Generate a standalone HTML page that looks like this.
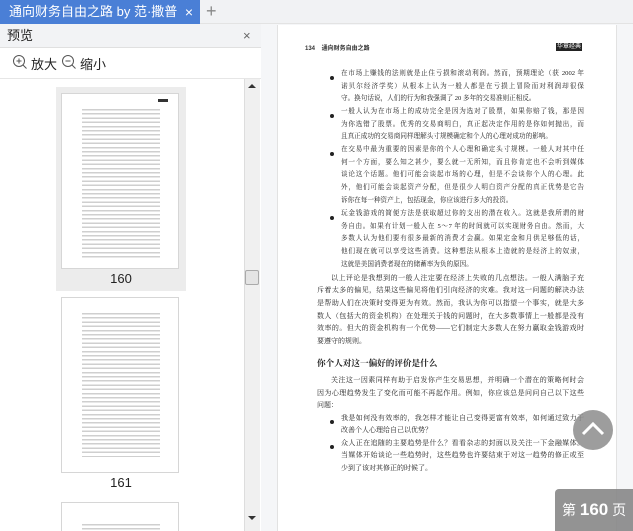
<!DOCTYPE html>
<html style="width:633px;height:531px;overflow:hidden"><head><meta charset="utf-8"><style>
*{margin:0;padding:0;box-sizing:border-box}
body{width:633px;height:531px;overflow:hidden;background:#f5f6f8;font-family:"Liberation Sans","Noto Sans CJK SC",sans-serif;position:relative}
.a{position:absolute}
.tabbar{left:0;top:0;width:633px;height:24px;background:#f1f2f4;border-bottom:1px solid #e3e3e3}
.tab{left:0;top:0;width:200px;height:24px;background:#4a7fd6;color:#fff;font-size:13px;line-height:24px;padding-left:9px;white-space:nowrap;overflow:hidden}
.panel{left:0;top:24px;width:261px;height:507px;background:#fff}
.ph{left:0;top:24px;width:261px;height:24px;background:#f2f3f5;border-bottom:1px solid #e0e0e0;font-size:13px;line-height:24px;padding-left:7px;color:#222}
.tool{left:0;top:48px;width:261px;height:31px;border-bottom:1px solid #e6e6e6;font-size:13px;color:#222}
.sb{left:244px;top:79px;width:16px;height:452px;background:#f0f0f0;border-left:1px solid #ddd}
.page{left:277px;top:25px;width:340px;height:506px;background:#fff;border-left:1px solid #e2e2e2;border-right:1px solid #e2e2e2}
.ln{position:absolute;font-family:"Liberation Serif","Noto Serif CJK SC",serif;font-size:6.6px;color:#222;white-space:nowrap;text-align:justify;text-align-last:justify;line-height:12px;height:12px;overflow:hidden}
.ln.l{text-align:left;text-align-last:left}
.b{left:341px;width:243px}
.p{left:317px;width:267px;font-size:7px}
.dot{position:absolute;left:330px;width:4px;height:4px;border-radius:50%;background:#222}
.th{position:absolute;left:61px;width:118px;height:176px;background:#fff;border:1px solid #d6d6d6;overflow:hidden}
.tl{position:absolute;background:repeating-linear-gradient(#fff 0,#fff 1px,#cfcfcf 1px,#cfcfcf 2.5px,#fff 2.5px,#fff 4.2px)}
</style></head><body>
<div class="a tabbar"></div>
<div class="a tab">通向财务自由之路 by 范·撒普.pdf</div>
<div class="a" style="left:178px;top:0;width:22px;height:24px;background:#4a7fd6;color:#fff;font-size:14px;line-height:24px;text-align:center">×</div>
<div class="a" style="left:206px;top:0;font-size:18px;line-height:22px;color:#888">+</div>
<div class="a panel"></div>
<div class="a ph">预览<span style="position:absolute;left:243px;color:#666">×</span></div>
<div class="a tool">
 <svg class="a" style="left:12px;top:6px" width="16" height="16" viewBox="0 0 16 16"><circle cx="7" cy="7" r="5.5" fill="none" stroke="#555"/><path d="M4.5 7h5M7 4.5v5M11 11l3.5 3.5" stroke="#555" fill="none"/></svg>
 <span class="a" style="left:31px;top:6px">放大</span>
 <svg class="a" style="left:61px;top:6px" width="16" height="16" viewBox="0 0 16 16"><circle cx="7" cy="7" r="5.5" fill="none" stroke="#555"/><path d="M4.5 7h5M11 11l3.5 3.5" stroke="#555" fill="none"/></svg>
 <span class="a" style="left:80px;top:6px">缩小</span>
</div>
<div class="a sb"></div>
<div class="a" style="left:248px;top:84px;width:0;height:0;border-left:4px solid transparent;border-right:4px solid transparent;border-bottom:4px solid #333"></div>
<div class="a" style="left:245px;top:270px;width:14px;height:15px;background:#e4e4e4;border:1px solid #aaa;border-radius:2px"></div>
<div class="a" style="left:248px;top:516px;width:0;height:0;border-left:4px solid transparent;border-right:4px solid transparent;border-top:4px solid #333"></div>
<div class="a" style="left:56px;top:87px;width:130px;height:204px;background:#ececec"></div>
<div class="th" style="top:93px"><div class="tl" style="left:20px;top:14px;width:78px;height:150px"></div><div class="a" style="left:96px;top:5px;width:10px;height:3px;background:#333"></div></div>
<div class="a" style="left:56px;top:271px;width:130px;text-align:center;font-size:13px;color:#222">160</div>
<div class="th" style="top:297px"><div class="tl" style="left:20px;top:14px;width:78px;height:145px"></div></div>
<div class="a" style="left:56px;top:475px;width:130px;text-align:center;font-size:13px;color:#222">161</div>
<div class="th" style="top:502px;height:29px;border-bottom:none"><div class="tl" style="left:20px;top:20px;width:78px;height:9px"></div></div>

<div class="a page"></div>
<div class="a" style="left:305px;top:43px;font-size:6px;color:#333;font-weight:bold;white-space:nowrap">134&nbsp;&nbsp;&nbsp;&nbsp;通向财务自由之路</div>
<div class="a" style="left:556px;top:43px;width:26px;height:8px;background:#222;color:#fff;font-size:6px;line-height:8px;text-align:center;white-space:nowrap;overflow:hidden">华章经典</div>

<div class="dot" style="top:76px"></div><div class="ln b" style="top:68px">在市场上赚钱的法则就是止住亏损和滚动利润。然而，预期理论（获 2002 年</div>
<div class="ln b" style="top:81px">诺贝尔经济学奖）从根本上认为一般人都是在亏损上冒险而对利润却很保</div>
<div class="ln l" style="left:341px;top:93px">守。换句话说，人们的行为和我强调了 20 多年的交易准则正相反。</div>
<div class="dot" style="top:114px"></div><div class="ln b" style="top:106px">一般人认为在市场上的成功完全是因为选对了股票，如果你赔了钱，那是因</div>
<div class="ln b" style="top:119px">为你选错了股票。优秀的交易商明白，真正起决定作用的是你如何抛出，而</div>
<div class="ln l" style="left:341px;top:131px">且真正成功的交易商同样理解头寸规模确定和个人的心理对成功的影响。</div>
<div class="dot" style="top:152px"></div><div class="ln b" style="top:144px">在交易中最为重要的因素是你的个人心理和确定头寸规模。一般人对其中任</div>
<div class="ln b" style="top:157px">何一个方面，要么知之甚少，要么就一无所知，而且你肯定也不会听到媒体</div>
<div class="ln b" style="top:169px">谈论这个话题。他们可能会谈起市场的心理，但是不会谈你个人的心理。此</div>
<div class="ln b" style="top:182px">外，他们可能会谈起资产分配，但是很少人明白资产分配的真正优势是它告</div>
<div class="ln l" style="left:341px;top:195px">诉你在每一种资产上，包括现金，你应该进行多大的投资。</div>
<div class="dot" style="top:216px"></div><div class="ln b" style="top:208px">玩金钱游戏的简便方法是获取超过你的支出的潜在收入。这就是我所谓的财</div>
<div class="ln b" style="top:221px">务自由。如果有计划一般人在 5～7 年的时间就可以实现财务自由。然而，大</div>
<div class="ln b" style="top:233px">多数人认为他们要有很多最新的消费才会赢。如果定金和月供足够低的话，</div>
<div class="ln b" style="top:246px">他们现在就可以享受这些消费。这种想法从根本上造就的是经济上的奴隶，</div>
<div class="ln l" style="left:341px;top:259px">这就是美国消费者现在的储蓄率为负的原因。</div>
<div class="ln p" style="left:331px;width:253px;top:272px">以上评论是我想到的一般人注定要在经济上失败的几点想法。一般人满脑子充</div>
<div class="ln p" style="top:284px">斥着太多的偏见，结果这些偏见将他们引向经济的灾难。我对这一问题的解决办法</div>
<div class="ln p" style="top:297px">是帮助人们在决策时变得更为有效。然而，我认为你可以指望一个事实，就是大多</div>
<div class="ln p" style="top:310px">数人（包括大的资金机构）在处理关于钱的问题时，在大多数事情上一般都是没有</div>
<div class="ln p" style="top:322px">效率的。但大的资金机构有一个优势——它们制定大多数人在努力赢取金钱游戏时</div>
<div class="ln p l" style="top:335px">要遵守的规则。</div>
<div class="a" style="left:317px;top:357px;font-family:'Liberation Serif','Noto Serif CJK SC',serif;font-weight:bold;font-size:8.6px;color:#222;white-space:nowrap">你个人对这一偏好的评价是什么</div>
<div class="ln p" style="left:331px;width:253px;top:374px">关注这一因素同样有助于启发你产生交易思想，并明确一个潜在的策略何时会</div>
<div class="ln p" style="top:387px">因为心理趋势发生了变化而可能不再起作用。例如，你应该总是问问自己以下这些</div>
<div class="ln p l" style="top:399px">问题：</div>
<div class="dot" style="top:420px"></div><div class="ln b" style="top:412px;font-size:7px">我是如何没有效率的，我怎样才能让自己变得更富有效率，如何通过致力于</div>
<div class="ln l" style="left:341px;top:424px;font-size:7px">改善个人心理给自己以优势？</div>
<div class="dot" style="top:445px"></div><div class="ln b" style="top:437px;font-size:7px">众人正在追随的主要趋势是什么？看看杂志的封面以及关注一下金融媒体。</div>
<div class="ln b" style="top:449px;font-size:7px">当媒体开始谈论一些趋势时，这些趋势也许要结束于对这一趋势的修正或至</div>
<div class="ln l" style="left:341px;top:462px;font-size:7px">少到了该对其修正的时候了。</div>

<div class="a" style="left:573px;top:410px;width:40px;height:40px;border-radius:50%;background:rgba(140,140,140,.85)"></div>
<svg class="a" style="left:573px;top:410px" width="40" height="40"><path d="M10 24L20 14L30 24" stroke="#fff" stroke-width="3" fill="none"/></svg>
<div class="a" style="left:555px;top:489px;width:78px;height:42px;border-radius:4px 0 0 0;background:rgba(135,135,135,.9);color:#fff;font-size:14px;line-height:42px;padding-left:7px;white-space:nowrap">第 <b style="font-size:17px">160</b> 页</div>
</body></html>
